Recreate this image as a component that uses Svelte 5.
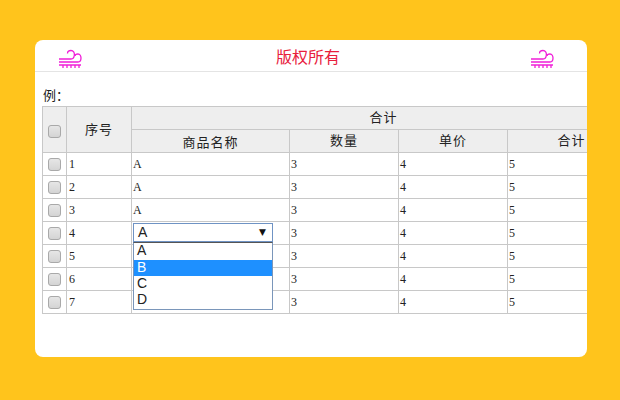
<script>
	const rows = [1, 2, 3, 4, 5, 6, 7];
	const options = ['A', 'B', 'C', 'D'];
	const active = 'B';
</script>

{#snippet wind()}
	<svg class="wind" viewBox="0 0 24 20" width="24" height="20" aria-hidden="true">
		<path d="M1 11H13C17 11 18 2.5 13 2.5C10.5 2.5 9.5 4 9.5 5.5" />
		<path d="M1 14H20C24 14 24 6 20 6C18 6 17 7 17 8" />
		<path d="M1 17H23" />
		<path d="M5 17V20M9 17V20M13 17V20M17 17V20M21 17V20" />
	</svg>
{/snippet}

<div class="card">
	<header>
		{@render wind()}
		<h1>版权所有</h1>
		{@render wind()}
	</header>

	<p class="label">例：</p>

	<div class="wrap">
		<table>
			<colgroup>
				<col style="width: 24px" />
				<col style="width: 65px" />
				<col style="width: 158px" />
				<col style="width: 109px" />
				<col style="width: 109px" />
				<col style="width: 128px" />
			</colgroup>
			<thead>
				<tr>
					<th rowspan="2"><span class="check"></span></th>
					<th rowspan="2">序号</th>
					<th colspan="4">合计</th>
				</tr>
				<tr>
					<th>商品名称</th>
					<th>数量</th>
					<th>单价</th>
					<th>合计</th>
				</tr>
			</thead>
			<tbody>
				{#each rows as n}
					<tr>
						<td><span class="check"></span></td>
						<td>{n}</td>
						{#if n === 4}
							<td class="select-cell">
								<div class="select">
									<span>A</span>
									<span class="arrow">▼</span>
								</div>
								<ul class="menu">
									{#each options as o}
										<li class:active={o === active}>{o}</li>
									{/each}
								</ul>
							</td>
						{:else if n < 4}
							<td>A</td>
						{:else}
							<td></td>
						{/if}
						<td>3</td>
						<td>4</td>
						<td>5</td>
					</tr>
				{/each}
			</tbody>
		</table>
	</div>
</div>

<style>
	:global(body) {
		background: #ffc41c;
	}

	.card {
		box-sizing: border-box;
		width: 552px;
		height: 317px;
		margin: 40px 0 0 35px;
		background: #fff;
		border-radius: 8px;
		overflow: hidden;
		font-family: "Liberation Serif", "Noto Sans CJK SC", serif;
		font-size: 12px;
		color: #222;
	}

	header {
		box-sizing: border-box;
		height: 32px;
		border-bottom: 1px solid #e4e4e4;
		display: flex;
		align-items: center;
		justify-content: space-between;
		padding: 0 33px 0 23px;
	}

	h1 {
		margin: 0 0 0 4px;
		font: 400 16px "Noto Sans CJK SC", sans-serif;
		color: #e8203c;
	}

	.wind {
		fill: none;
		stroke: #f01fd8;
		stroke-width: 1.3;
		margin-top: 5px;
	}

	.label {
		margin: 0;
		padding: 14px 0 0 8px;
		height: 20px;
		line-height: 17px;
		font-size: 13px;
		font-family: "Noto Sans CJK SC", sans-serif;
	}

	.wrap {
		padding-left: 7px;
	}

	table {
		border-collapse: collapse;
		table-layout: fixed;
		width: 593px;
	}

	th,
	td {
		box-sizing: border-box;
		border: 1px solid #c8c8c8;
		height: 23px;
		padding: 1px 1px 0 2px;
		font-size: 12px;
	}

	td + td + td {
		padding-left: 1px;
	}

	th {
		background: #eeeeee;
		font: 400 13px "Noto Sans CJK SC", sans-serif;
		letter-spacing: 1px;
		text-align: center;
		padding: 0 0 3px 0;
	}

	th:first-child,
	td:first-child {
		text-align: center;
		padding: 0;
	}

	.check {
		display: inline-block;
		box-sizing: border-box;
		width: 13px;
		height: 13px;
		vertical-align: middle;
		background: linear-gradient(#e6e6e6, #d4d4d4);
		border: 1px solid #a9a9a9;
		border-radius: 3px;
	}

	td.select-cell {
		position: relative;
		overflow: visible;
		padding: 0;
	}

	.select {
		box-sizing: border-box;
		display: flex;
		justify-content: space-between;
		align-items: center;
		height: 19px;
		width: 140px;
		margin: -1px 0 0 1px;
		padding: 0 6px 2px 4px;
		background: #fff;
		border: 1px solid #6f93c4;
		font: 14px "Liberation Sans", sans-serif;
	}

	.arrow {
		font-size: 9px;
		color: #111;
		font-family: "DejaVu Sans", sans-serif;
	}

	.menu {
		position: absolute;
		left: 1px;
		top: 20px;
		z-index: 2;
		box-sizing: border-box;
		width: 140px;
		height: 68px;
		margin: 0;
		padding: 0;
		list-style: none;
		background: #fff;
		border: 1px solid #7a96ba;
		border-top-color: #555;
		font: 14px/15px "Liberation Sans", sans-serif;
	}

	.menu li {
		height: 16px;
		padding-left: 3px;
	}

	.menu li:first-child {
		height: 17px;
	}

	.menu li.active {
		background: #1e90ff;
		color: #fff;
	}
</style>
